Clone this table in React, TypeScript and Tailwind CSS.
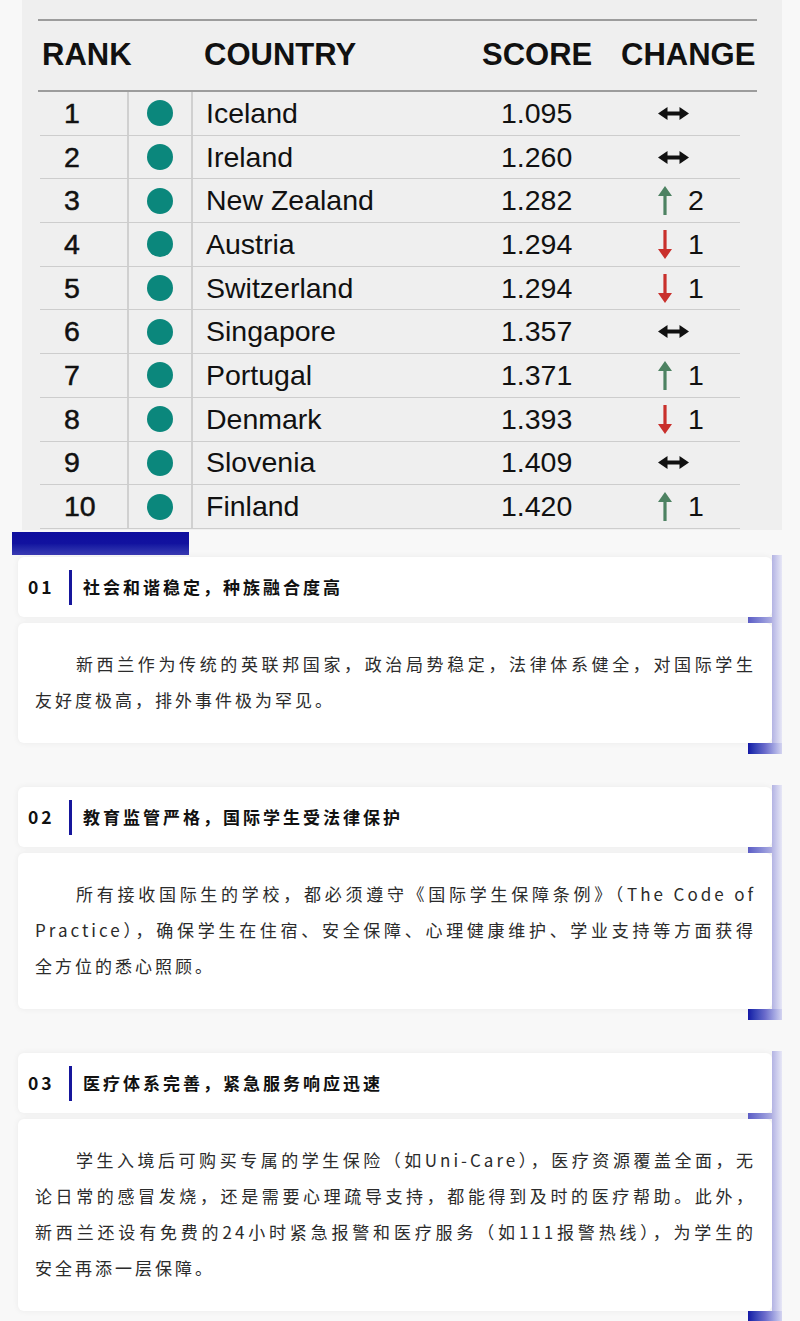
import React from "react";

type Change = { dir: "same" | "up" | "down"; n?: number };
const rows: { rank: number; country: string; score: string; change: Change }[] = [
  { rank: 1, country: "Iceland", score: "1.095", change: { dir: "same" } },
  { rank: 2, country: "Ireland", score: "1.260", change: { dir: "same" } },
  { rank: 3, country: "New Zealand", score: "1.282", change: { dir: "up", n: 2 } },
  { rank: 4, country: "Austria", score: "1.294", change: { dir: "down", n: 1 } },
  { rank: 5, country: "Switzerland", score: "1.294", change: { dir: "down", n: 1 } },
  { rank: 6, country: "Singapore", score: "1.357", change: { dir: "same" } },
  { rank: 7, country: "Portugal", score: "1.371", change: { dir: "up", n: 1 } },
  { rank: 8, country: "Denmark", score: "1.393", change: { dir: "down", n: 1 } },
  { rank: 9, country: "Slovenia", score: "1.409", change: { dir: "same" } },
  { rank: 10, country: "Finland", score: "1.420", change: { dir: "up", n: 1 } },
];

function UpArrow() {
  return (
    <svg width="14" height="29" viewBox="0 0 14 29">
      <path d="M7 0 L14 10 H8.6 V29 H5.4 V10 H0 Z" fill="#4d8262" />
    </svg>
  );
}
function DownArrow() {
  return (
    <svg width="14" height="29" viewBox="0 0 14 29">
      <path d="M7 29 L14 19 H8.6 V0 H5.4 V19 H0 Z" fill="#c9302c" />
    </svg>
  );
}
function BothArrow() {
  return (
    <svg width="31" height="13" viewBox="0 0 31 13">
      <path d="M0 6.5 L9.5 0 V4.4 H21.5 V0 L31 6.5 L21.5 13 V8.6 H9.5 V13 Z" fill="#111" />
    </svg>
  );
}

function Section({ num, title, lines }: { num: string; title: string; lines: string[] }) {
  return (
    <div className="relative ml-[18px] w-[764px] pr-[10px] pt-[2px] pb-[11px]">
      <div className="absolute right-0 top-0 bottom-0 w-[10px] bg-linear-to-r from-[#b3b3e3] to-[#e7e7f6]" />
      <div className="absolute right-[10px] top-[62px] h-[6px] w-[24px] bg-linear-to-r from-[#5c5cc5] to-[#aeaee2]" />
      <div className="absolute right-0 bottom-0 h-[11px] w-[34px] bg-linear-to-r from-[#1515a6] via-[#6b6bcb] to-[#d4d4f0]" />
      <div className="flex h-[60px] items-center rounded-[6px] bg-white pl-[10px] shadow-[0_0_6px_rgba(0,0,0,0.06)]">
        <div className="w-[41px] text-[17.5px] font-bold tracking-[3px] text-[#111]">{num}</div>
        <div className="h-[35px] w-[3px] bg-[#16169c]" />
        <div className="ml-[11px] text-[17px] font-bold tracking-[3px] text-[#111]">{title}</div>
      </div>
      <div className="mt-[6px] rounded-[6px] bg-white pl-[17px] pr-[16px] pt-[23px] pb-[25px] shadow-[0_0_6px_rgba(0,0,0,0.06)]">
        <p className="text-[17px] leading-[36px] tracking-[3px] text-[#2b2b2b]">
          {lines.map((l, i) => (
            <span
              key={i}
              className={
                "block whitespace-nowrap " +
                (i === 0 ? "pl-[41px] " : "") +
                (i < lines.length - 1 ? "text-justify [text-align-last:justify]" : "")
              }
            >
              {l}
            </span>
          ))}
        </p>
      </div>
    </div>
  );
}

export default function App() {
  return (
    <div
      className="min-h-screen w-full bg-[#f8f8f8]"
      style={{ fontFamily: '"Noto Sans CJK SC", "Noto Sans", sans-serif' }}
    >
      {/* Ranking table */}
      <div
        className="ml-[22px] h-[530px] w-[760px] bg-[#efefef] pt-[19px] text-[#111]"
        style={{ fontFamily: '"Liberation Sans", Arial, sans-serif' }}
      >
        <div className="ml-[16px] flex h-[73px] w-[719px] items-center border-y-2 border-[#9c9c9c] text-[31px] font-bold">
          <div className="w-[166px] pl-[4px]">RANK</div>
          <div className="w-[278px]">COUNTRY</div>
          <div className="w-[139px]">SCORE</div>
          <div>CHANGE</div>
        </div>
        <div className="ml-[18px] w-[700px]">
          {rows.map((r) => (
            <div
              key={r.rank}
              className="flex h-[43.7px] items-center border-b-[1.5px] border-[#cdcdcd] text-[28.5px]"
            >
              <div className="flex h-full w-[89px] items-center border-r-2 border-[#d0d0d0] pl-[24px] [-webkit-text-stroke:0.5px_#111]">
                {r.rank}
              </div>
              <div className="flex h-full w-[64px] items-center justify-center border-r-2 border-[#d0d0d0]">
                <div className="h-[26px] w-[26px] rounded-full bg-[#0b877c]" />
              </div>
              <div className="w-[308px] pl-[13px]">{r.country}</div>
              <div className="w-[140px]">{r.score}</div>
              <div className="flex items-center pl-[17px]">
                {r.change.dir === "same" && <BothArrow />}
                {r.change.dir === "up" && <UpArrow />}
                {r.change.dir === "down" && <DownArrow />}
                {r.change.n !== undefined && <span className="ml-[16px]">{r.change.n}</span>}
              </div>
            </div>
          ))}
        </div>
      </div>

      <div className="ml-[12px] mt-[2px] h-[23px] w-[177px] bg-linear-to-b from-[#0e0e9e] via-[#12129f] to-[#3a3ab4]" />

      <div className="flex flex-col gap-[31px]">
        <Section
          num="01"
          title="社会和谐稳定，种族融合度高"
          lines={[
            "新西兰作为传统的英联邦国家，政治局势稳定，法律体系健全，对国际学生",
            "友好度极高，排外事件极为罕见。",
          ]}
        />
        <Section
          num="02"
          title="教育监管严格，国际学生受法律保护"
          lines={[
            "所有接收国际生的学校，都必须遵守《国际学生保障条例》（The Code of",
            "Practice），确保学生在住宿、安全保障、心理健康维护、学业支持等方面获得",
            "全方位的悉心照顾。",
          ]}
        />
        <Section
          num="03"
          title="医疗体系完善，紧急服务响应迅速"
          lines={[
            "学生入境后可购买专属的学生保险（如Uni-Care），医疗资源覆盖全面，无",
            "论日常的感冒发烧，还是需要心理疏导支持，都能得到及时的医疗帮助。此外，",
            "新西兰还设有免费的24小时紧急报警和医疗服务（如111报警热线），为学生的",
            "安全再添一层保障。",
          ]}
        />
      </div>
    </div>
  );
}
